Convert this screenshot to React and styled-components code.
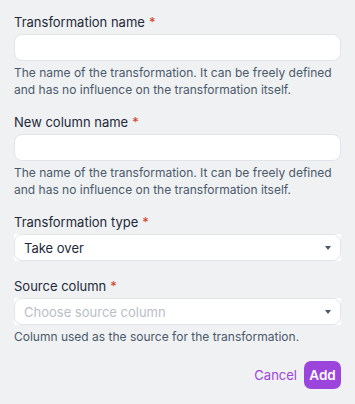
import styled, { createGlobalStyle } from "styled-components";

const Global = createGlobalStyle`
  html, body {
    margin: 0;
    background: #f0f1f3;
  }
  body {
    font-family: "Inter", "Noto Sans", sans-serif;
  }
`;

const Form = styled.div`
  width: 355px;
  height: 404px;
  box-sizing: border-box;
  padding: 13px 14px 0 14px;
  display: flex;
  flex-direction: column;
`;

const Field = styled.div`
  display: flex;
  flex-direction: column;
  margin-bottom: ${(props) => props.gap || "15px"};
`;

const Label = styled.label`
  font-size: 13px;
  line-height: 18px;
  color: #1e2a3a;
  margin-bottom: ${(props) => props.space || "3px"};
`;

const Star = styled.span`
  color: #d0421b;
  margin-left: 4px;
`;

const Input = styled.div`
  height: 27px;
  box-sizing: border-box;
  border: 1px solid #e1e4e9;
  border-radius: 8px;
  background: #ffffff;
`;

const SelectBack = styled.div`
  background: #ffffff;
`;

const Select = styled.div`
  height: 27px;
  box-sizing: border-box;
  border: 1px solid #e1e4e9;
  border-radius: 8px;
  display: flex;
  align-items: center;
  justify-content: space-between;
  padding: 0 9px 0 9px;
  font-size: 13px;
  color: ${(props) => (props.placeholder ? "#b9bec6" : "#1e2a3a")};
`;

const Caret = styled.span`
  width: 0;
  height: 0;
  border-left: 3.5px solid transparent;
  border-right: 3.5px solid transparent;
  border-top: 4px solid #4a5a6a;
`;

const Help = styled.p`
  margin: 3px 0 0 0;
  font-size: 12px;
  line-height: 17px;
  color: #4a5a6a;
`;

const Actions = styled.div`
  display: flex;
  justify-content: flex-end;
  align-items: center;
  gap: 7px;
  margin-top: 0;
`;

const LinkButton = styled.button`
  border: none;
  background: none;
  padding: 0;
  font-family: inherit;
  font-size: 13px;
  color: #9b45dc;
`;

const PrimaryButton = styled.button`
  border: none;
  background: #9b45dc;
  color: #ffffff;
  font-family: inherit;
  font-size: 13.5px;
  font-weight: 600;
  width: 37px;
  height: 28px;
  padding: 0;
  border-radius: 7px;
`;

const App = () => {
  return (
    <Form>
      <Global />
      <Field>
        <Label>
          Transformation name<Star>*</Star>
        </Label>
        <Input />
        <Help>
          The name of the transformation. It can be freely defined and has no
          influence on the transformation itself.
        </Help>
      </Field>
      <Field>
        <Label>
          New column name<Star>*</Star>
        </Label>
        <Input />
        <Help>
          The name of the transformation. It can be freely defined and has no
          influence on the transformation itself.
        </Help>
      </Field>
      <Field gap="16px">
        <Label>
          Transformation type<Star>*</Star>
        </Label>
        <SelectBack>
          <Select>
            Take over
            <Caret />
          </Select>
        </SelectBack>
      </Field>
      <Field gap="16px">
        <Label>
          Source column<Star>*</Star>
        </Label>
        <SelectBack>
          <Select placeholder>
            Choose source column
            <Caret />
          </Select>
        </SelectBack>
        <Help>Column used as the source for the transformation.</Help>
      </Field>
      <Actions>
        <LinkButton>Cancel</LinkButton>
        <PrimaryButton>Add</PrimaryButton>
      </Actions>
    </Form>
  );
};

export default App;
